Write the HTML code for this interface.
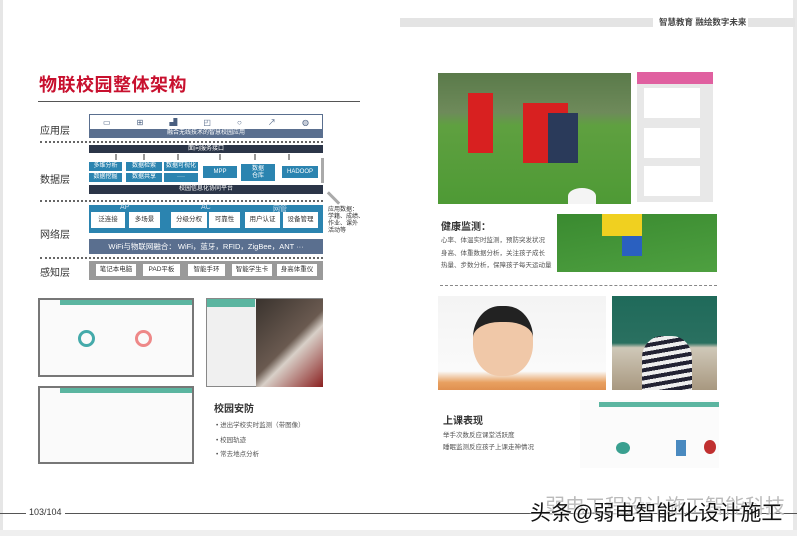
<!DOCTYPE html>
<html><head><meta charset="utf-8"><style>
*{margin:0;padding:0;box-sizing:border-box}
body{width:797px;height:536px;overflow:hidden;background:#fff;position:relative;font-family:"Liberation Sans","Noto Sans CJK SC",sans-serif}
.a{position:absolute}
.lbl{font-size:10px;color:#333}
.dash{border-top:2px dotted #666;height:0}
.blue{background:#2b84b0;color:#fff;font-size:6px;text-align:center}
.dark{background:#2b3548;color:#fff;font-size:6px;text-align:center;line-height:8px}
.slate{background:#5a6f8f;color:#fff;text-align:center}
.wb{background:#fff;color:#333;font-size:6.5px;text-align:center}
.ar{width:2px;background:#999}
.sm{font-size:6.5px;color:#555}
</style></head><body>
<div class="a" style="left:0;top:0;width:3px;height:536px;background:#e6e6e6"></div>
<div class="a" style="left:793px;top:0;width:4px;height:536px;background:#e8e8e8"></div>
<div class="a" style="left:0;top:530px;width:797px;height:6px;background:#efefef"></div>
<!-- header -->
<div class="a" style="left:400px;top:18px;width:253px;height:9px;background:#e4e4e4"></div>
<div class="a" style="left:659px;top:16px;font-size:8.5px;font-weight:bold;color:#444">智慧教育 融绘数字未来</div>
<div class="a" style="left:748px;top:18px;width:47px;height:9px;background:#e4e4e4"></div>
<!-- title -->
<div class="a" style="left:39px;top:71px;font-size:18px;font-weight:bold;color:#c8102e;letter-spacing:0.5px">物联校园整体架构</div>
<div class="a" style="left:38px;top:101px;width:322px;height:1px;background:#555"></div>
<!-- layers labels -->
<div class="a lbl" style="left:40px;top:122px">应用层</div>
<div class="a lbl" style="left:40px;top:171px">数据层</div>
<div class="a lbl" style="left:40px;top:226px">网络层</div>
<div class="a lbl" style="left:40px;top:264px">感知层</div>
<!-- app -->
<div class="a" style="left:89px;top:114px;width:234px;height:16px;border:1px solid #5a6f8f;background:#fff;font-size:8px;color:#4a5f80;display:flex;justify-content:space-around;align-items:center">
<span>▭</span><span>⊞</span><span>▟</span><span>◰</span><span>○</span><span>↗</span><span>◍</span></div>
<div class="a slate" style="left:89px;top:129px;width:234px;height:9px;font-size:6px;line-height:9px">融合无线技术的智慧校园应用</div>
<div class="a dash" style="left:40px;top:141px;width:283px"></div>
<!-- data -->
<div class="a dark" style="left:89px;top:145px;width:234px;height:8px">面向服务接口</div>
<div class="a ar" style="left:115px;top:154px;height:6px"></div><div class="a ar" style="left:143px;top:154px;height:6px"></div><div class="a ar" style="left:177px;top:154px;height:6px"></div><div class="a ar" style="left:219px;top:154px;height:6px"></div><div class="a ar" style="left:254px;top:154px;height:6px"></div><div class="a ar" style="left:288px;top:154px;height:6px"></div>
<div class="a blue" style="left:89px;top:162px;width:33px;height:9px;line-height:9px">多维分析</div>
<div class="a blue" style="left:126px;top:162px;width:36px;height:9px;line-height:9px">数据检索</div>
<div class="a blue" style="left:164px;top:162px;width:34px;height:9px;line-height:9px">数据可视化</div>
<div class="a blue" style="left:89px;top:173px;width:33px;height:9px;line-height:9px">数据挖掘</div>
<div class="a blue" style="left:126px;top:173px;width:36px;height:9px;line-height:9px">数据共享</div>
<div class="a blue" style="left:164px;top:173px;width:34px;height:9px;line-height:9px">····</div>
<div class="a blue" style="left:203px;top:166px;width:34px;height:12px;line-height:12px">MPP</div>
<div class="a blue" style="left:241px;top:164px;width:34px;height:17px;line-height:7px;padding-top:2px">数据<br>仓库</div>
<div class="a blue" style="left:282px;top:166px;width:36px;height:12px;line-height:12px">HADOOP</div>
<div class="a" style="left:321px;top:158px;width:3px;height:25px;background:#aaa"></div>
<div class="a dark" style="left:89px;top:185px;width:234px;height:9px;line-height:9px">校园信息化协同平台</div>
<div class="a dash" style="left:40px;top:200px;width:283px"></div>
<div class="a" style="left:332px;top:190px;width:3px;height:16px;background:#aaa;transform:rotate(-45deg)"></div>
<div class="a sm" style="left:328px;top:207px;line-height:7px;font-size:6px;color:#333">应用数据：<br>学籍、成绩、<br>作业、课外<br>活动等</div>
<!-- network -->
<div class="a" style="left:89px;top:205px;width:234px;height:28px;background:#2b84b0"></div>
<div class="a" style="left:120px;top:204px;font-size:7px;color:#cde">AP</div>
<div class="a" style="left:201px;top:204px;font-size:7px;color:#cde">AC</div>
<div class="a" style="left:273px;top:204px;font-size:7px;color:#cde">网管</div>
<div class="a wb" style="left:91px;top:212px;width:34px;height:16px;line-height:16px">泛连接</div>
<div class="a wb" style="left:129px;top:212px;width:31px;height:16px;line-height:16px">多场景</div>
<div class="a wb" style="left:171px;top:212px;width:36px;height:16px;line-height:16px">分级分权</div>
<div class="a wb" style="left:209px;top:212px;width:31px;height:16px;line-height:16px">可靠性</div>
<div class="a wb" style="left:245px;top:212px;width:35px;height:16px;line-height:16px">用户认证</div>
<div class="a wb" style="left:283px;top:212px;width:35px;height:16px;line-height:16px">设备管理</div>
<div class="a slate" style="left:89px;top:239px;width:234px;height:15px;font-size:7.5px;line-height:15px">WiFi与物联网融合： WiFi，蓝牙，RFID，ZigBee，ANT ···</div>
<div class="a dash" style="left:40px;top:257px;width:283px"></div>
<div class="a" style="left:89px;top:261px;width:234px;height:19px;background:#9a9a9a"></div>
<div class="a wb" style="left:96px;top:264px;width:40px;height:12px;line-height:12px">笔记本电脑</div>
<div class="a wb" style="left:143px;top:264px;width:37px;height:12px;line-height:12px">PAD平板</div>
<div class="a wb" style="left:188px;top:264px;width:37px;height:12px;line-height:12px">智能手环</div>
<div class="a wb" style="left:232px;top:264px;width:40px;height:12px;line-height:12px">智能学生卡</div>
<div class="a wb" style="left:277px;top:264px;width:40px;height:12px;line-height:12px">身高体重仪</div>
<!-- left screenshots -->
<div class="a" style="left:38px;top:298px;width:156px;height:79px;border:2px solid #777;background:#fafafa">
<div style="height:5px;background:#5bb5a0;margin-left:20px"></div>
<div class="a" style="left:38px;top:30px;width:17px;height:17px;border-radius:50%;border:3px solid #4aa"></div>
<div class="a" style="left:95px;top:30px;width:17px;height:17px;border-radius:50%;border:3px solid #e88"></div>
</div>
<div class="a" style="left:38px;top:386px;width:156px;height:78px;border:2px solid #777;background:#fafafa">
<div style="height:5px;background:#5bb5a0;margin-left:20px"></div></div>
<div class="a" style="left:206px;top:298px;width:117px;height:89px;background:#f0f0f0;border:1px solid #888">
<div class="a" style="left:0;top:0;width:48px;height:8px;background:#5bb5a0"></div>
<div class="a" style="left:49px;top:0;width:67px;height:88px;background:linear-gradient(135deg,#3a332e,#6a5a50 50%,#d8d0c8 60%,#8a2020)"></div>
</div>
<div class="a" style="left:214px;top:400px;font-size:10px;font-weight:bold;color:#333">校园安防</div>
<div class="a sm" style="left:216px;top:419px">• 进出学校实时监测（带图像）</div>
<div class="a sm" style="left:216px;top:434px">• 校园轨迹</div>
<div class="a sm" style="left:216px;top:448px">• 常去地点分析</div>
<!-- right top -->
<div class="a" style="left:438px;top:73px;width:193px;height:131px;background:linear-gradient(180deg,#5a7a4a 0%,#6e8a5a 30%,#5fa040 40%,#4e9a35 100%)">
<div class="a" style="left:30px;top:20px;width:25px;height:60px;background:#d82020"></div>
<div class="a" style="left:85px;top:30px;width:45px;height:60px;background:#d82020"></div>
<div class="a" style="left:110px;top:40px;width:30px;height:50px;background:#2a3a5a"></div>
<div class="a" style="left:130px;top:115px;width:28px;height:16px;border-radius:50% 50% 0 0;background:#f4f4f4"></div>
</div>
<div class="a" style="left:637px;top:72px;width:76px;height:130px;background:#e8e8e8">
<div style="height:12px;background:#e060a0"></div>
<div class="a" style="left:7px;top:16px;width:56px;height:30px;background:#fff"></div>
<div class="a" style="left:7px;top:56px;width:56px;height:30px;background:#fff"></div>
<div class="a" style="left:7px;top:94px;width:56px;height:30px;background:#fff"></div>
</div>
<div class="a" style="left:441px;top:218px;font-size:10px;font-weight:bold;color:#333">健康监测：</div>
<div class="a sm" style="left:441px;top:235px;line-height:12.5px">心率、体温实时监测，预防突发状况<br>身高、体重数据分析，关注孩子成长<br>热量、步数分析，保障孩子每天运动量</div>
<div class="a" style="left:557px;top:214px;width:160px;height:58px;background:linear-gradient(170deg,#3a8a30,#4ea040)">
<div class="a" style="left:45px;top:0;width:40px;height:22px;background:#f0d020"></div>
<div class="a" style="left:65px;top:22px;width:20px;height:20px;background:#2a60c0"></div>
</div>
<div class="a" style="left:440px;top:285px;width:277px;border-top:1px dashed #888"></div>
<div class="a" style="left:438px;top:296px;width:168px;height:94px;background:linear-gradient(180deg,#f4f4f4 0%,#fafafa 80%,#e8a060 92%,#e09050)">
<div class="a" style="left:35px;top:10px;width:60px;height:70px;border-radius:45%;background:#f0c8a8;border-top:16px solid #222"></div>
</div>
<div class="a" style="left:612px;top:296px;width:105px;height:94px;background:linear-gradient(180deg,#1f6a5a 0%,#2a7060 50%,#cfc8b8 55%,#a89880)">
<div class="a" style="left:30px;top:40px;width:50px;height:54px;border-radius:40% 40% 0 0;background:repeating-linear-gradient(170deg,#223 0 4px,#eee 4px 8px)"></div>
</div>
<div class="a" style="left:443px;top:412px;font-size:10px;font-weight:bold;color:#333">上课表现</div>
<div class="a sm" style="left:443px;top:430px;line-height:12px">举手次数反应课堂活跃度<br>睡眠监测反应孩子上课走神情况</div>
<div class="a" style="left:580px;top:400px;width:139px;height:68px;background:#fbfbfb">
<div class="a" style="left:19px;top:2px;width:120px;height:5px;background:#5bb5a0"></div>
<div class="a" style="left:36px;top:42px;width:14px;height:12px;background:#3aa090;border-radius:50% 50% 50% 50%"></div>
<div class="a" style="left:96px;top:40px;width:10px;height:16px;background:#4a8ac0"></div>
<div class="a" style="left:124px;top:40px;width:12px;height:14px;border-radius:50%;background:#c03030"></div>
</div>
<!-- footer -->
<div class="a" style="left:0;top:513px;width:797px;height:1px;background:#555"></div>
<div class="a" style="left:26px;top:507px;background:#fff;padding:0 3px;font-size:9px;color:#333">103/104</div>
<div class="a" style="left:545px;top:490px;font-size:20px;color:#bbb">弱电工程设计施工智能科技</div>
<div class="a" style="left:530px;top:497px;font-size:21px;color:#111;text-shadow:0 0 2px #fff,0 0 2px #fff">头条@弱电智能化设计施工</div>
</body></html>
